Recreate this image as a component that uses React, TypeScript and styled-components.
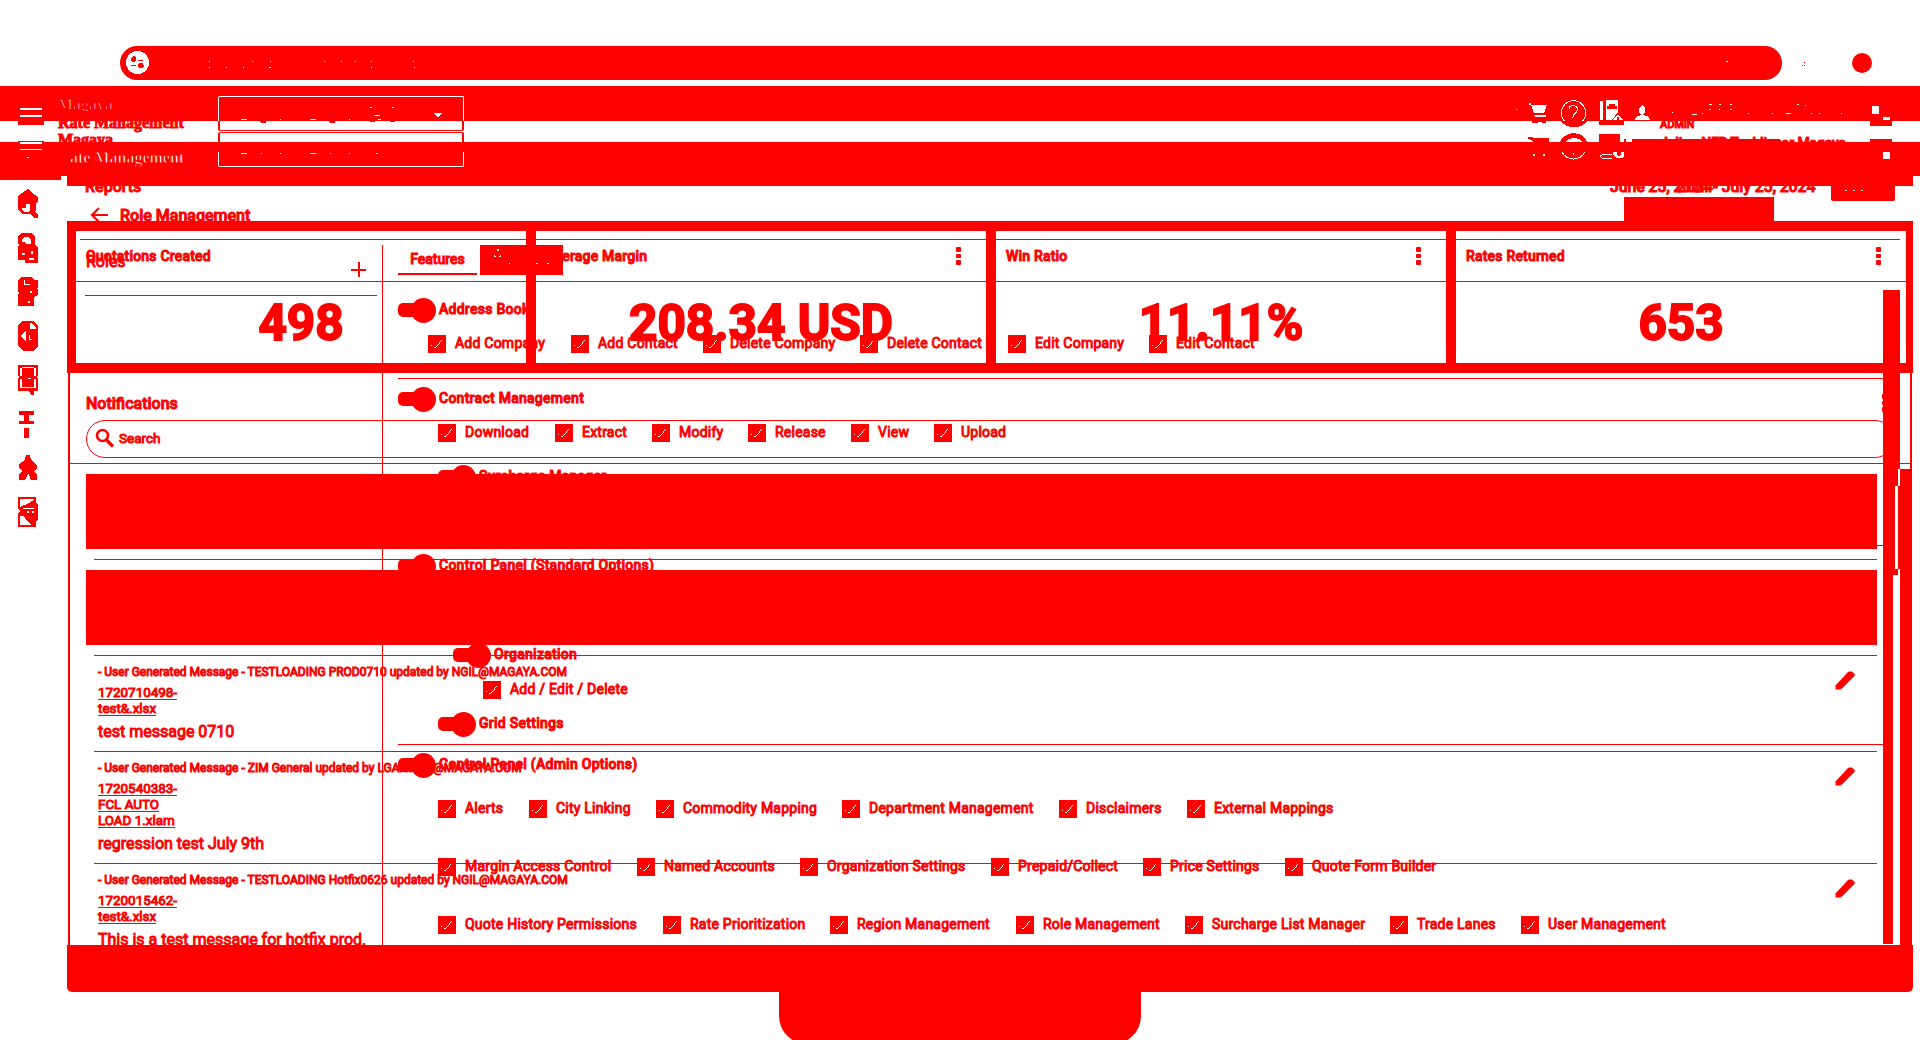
import React from 'react';
import styled, { createGlobalStyle, css } from 'styled-components';

const RED = '#ff0000';

const GlobalStyle = createGlobalStyle`
  *, *::before, *::after { box-sizing: border-box; }
  body { margin: 0; background: #ffffff; font-family: Roboto, "Liberation Sans", sans-serif; color: ${RED}; }
  svg { display: block; }
`;

const heavy = css`
  -webkit-text-stroke: 0.95px ${RED};
`;

const Page = styled.div`
  position: relative;
  width: 1920px;
  height: 1040px;
  overflow: hidden;
  background: #ffffff;
  display: flex;
  flex-direction: column;
`;

/* ---------- browser strip ---------- */
const BrowserStrip = styled.div`
  height: 86px;
  flex: none;
  padding: 46px 48px 6px 120px;
  display: flex;
  align-items: center;
`;
const AddressBar = styled.div`
  width: 1662px;
  flex: none;
  height: 34px;
  border-radius: 17px;
  background: ${RED};
  display: flex;
  align-items: center;
  padding-left: 5px;
`;
const ExtensionDots = styled.div`
  width: 70px;
  flex: none;
  display: flex;
  padding-left: 20px;
`;
const Profile = styled.div`
  width: 20px;
  height: 20px;
  flex: none;
  border-radius: 50%;
  background: ${RED};
`;

/* ---------- header bands ---------- */
const Band = styled.div<{ $h: number; $filled?: boolean }>`
  height: ${p => p.$h}px;
  flex: none;
  overflow: hidden;
  background: ${p => (p.$filled ? RED : '#ffffff')};
  display: grid;
  align-items: start;
  grid-template-rows: ${p => p.$h}px;
  grid-template-columns: 18px 26px 14px 132px 28px 246px 1050px 36px 8px 32px 8px 28px 6px 20px 8px 192px 16px 26px;
`;
const Cell = styled.div<{ $col: number; $top?: number }>`
  grid-column: ${p => p.$col};
  grid-row: 1;
  margin-top: ${p => p.$top ?? 0}px;
`;
const Brand = styled.div<{ $light?: boolean; $trim?: number }>`
  font: 700 16px/17px "Liberation Serif", serif;
  white-space: nowrap;
  color: ${p => (p.$light ? '#ffffff' : RED)};
  -webkit-text-stroke: ${p => p.$trim ?? 0.9}px ${RED};
`;
const SelectEdge = styled.div<{ $h: number; $side: 'top' | 'bottom'; $light?: boolean }>`
  height: ${p => p.$h}px;
  border: ${p => (p.$light ? 1 : 2)}px solid ${p => (p.$light ? '#ffffff' : RED)};
  ${p => (p.$side === 'top' ? 'border-bottom: 0;' : 'border-top: 0;')}
  border-${p => p.$side}-width: 1px;
  border-radius: ${p => (p.$side === 'top' ? '2px 2px 0 0' : '0 0 2px 2px')};
`;
const SecondEdge = styled.div`
  margin-top: 1px;
`;
const Account = styled.div<{ $size: number; $gap?: number }>`
  margin-top: ${p => p.$gap ?? 0}px;
  font-weight: 500;
  font-size: ${p => p.$size}px;
  line-height: 14px;
  letter-spacing: -0.15px;
  white-space: nowrap;
  ${heavy}
`;
const BandTail = styled.div`
  height: 10px;
  flex: none;
  display: flex;
  gap: 6px;
`;
const TailLeft = styled.div`
  width: 61px;
  height: 4px;
  background: ${RED};
`;
const TailMain = styled.div`
  width: 1846px;
  background: ${RED};
`;

/* ---------- body ---------- */
const Body = styled.div`
  height: 806px;
  flex: none;
  display: flex;
`;
const Rail = styled.div`
  width: 67px;
  padding: 3px 0 0 18px;
`;
const Main = styled.div`
  width: 1846px;
  display: flex;
  flex-direction: column;
`;
const Stack = styled.div`
  position: relative;
  height: 759px;
  overflow: hidden;
`;
const Layer = styled.div`
  position: absolute;
  inset: 0;
  display: flex;
  flex-direction: column;
`;
const FootBar = styled.div`
  height: 47px;
  background: ${RED};
  border-radius: 0 0 5px 5px;
`;
const Stand = styled.div`
  width: 362px;
  height: 52px;
  flex: none;
  margin-left: 779px;
  background: ${RED};
  border-radius: 0 0 28px 28px;
`;

/* ---------- dashboard ---------- */
const ReportRow = styled.div`
  height: 35px;
  flex: none;
  display: flex;
  align-items: flex-start;
  overflow: hidden;
  padding-left: 18px;
`;
const ReportTitle = styled.div`
  width: 1525px;
  margin-top: -8px;
  font-size: 16px;
  line-height: 18px;
  font-weight: 500;
  ${heavy}
`;
const DateStack = styled.div`
  width: 221px;
  margin-top: -8px;
  display: grid;
  font-size: 16px;
  line-height: 18px;
  font-weight: 500;
  letter-spacing: -0.18px;
  white-space: nowrap;
  ${heavy}
  & > span { grid-area: 1 / 1; }
`;
const MiddleDate = styled.span`
  padding-left: 67px;
`;
const RunButton = styled.div`
  width: 64px;
  height: 15px;
  background: ${RED};
  border-radius: 0 0 2px 2px;
  padding-left: 13px;
`;
const Banner = styled.div`
  position: absolute;
  left: 1557px;
  top: 11px;
  width: 150px;
  height: 24px;
  background: ${RED};
`;
const Metrics = styled.div`
  height: 152px;
  flex: none;
  display: flex;
  border: solid ${RED};
  border-width: 10px 7px 10px 9px;
`;
const Metric = styled.div`
  flex: 0 0 auto;
  width: 460px;
  border-right: 10px solid ${RED};
  &:last-child { width: 450px; border-right: 0; }
`;
const MetricHead = styled.div`
  height: 51px;
  border-bottom: 1px solid ${RED};
  padding: 16px 25px 0 10px;
  display: flex;
  justify-content: space-between;
  font-size: 14px;
  line-height: 18px;
  font-weight: 500;
  letter-spacing: 0.2px;
  ${heavy}
`;
const Kebab = styled.div`
  display: flex;
  flex-direction: column;
  gap: 2px;
  i { width: 5px; height: 4.5px; background: ${RED}; border-radius: 1px; }
`;
const MetricValue = styled.div`
  height: 81px;
  text-align: center;
  font-size: 49.5px;
  line-height: 82px;
  font-weight: 700;
  -webkit-text-stroke: 1.9px ${RED};
`;
const Notices = styled.div`
  flex: 1;
  min-height: 0;
  margin: 0 1px;
  border: solid ${RED};
  border-width: 0 2px;
  overflow: hidden;
`;
const NoticeHead = styled.div`
  height: 91px;
  border-bottom: 1px solid ${RED};
  padding: 21px 23px 0 16px;
`;
const NoticeTitle = styled.div`
  height: 26px;
  display: flex;
  justify-content: space-between;
  font-size: 16px;
  line-height: 19px;
  font-weight: 500;
  ${heavy}
`;
const SearchBox = styled.div`
  width: 1808px;
  height: 38px;
  border: 1px solid ${RED};
  border-radius: 19px;
  display: flex;
  align-items: center;
  gap: 4px;
  padding: 0 0 3px 8px;
  font-size: 13.5px;
  ${heavy}
`;
const NoticeList = styled.div`
  padding: 10px 0 0 16px;
  width: 1807px;
`;
const Redacted = styled.div`
  height: 75px;
  background: ${RED};
`;
const Rule = styled.div<{ $above: number; $below: number }>`
  height: 1px;
  margin: ${p => p.$above}px 0 ${p => p.$below}px 8px;
  background: ${RED};
`;
const Message = styled.div<{ $h: number }>`
  height: ${p => p.$h}px;
  padding: 8px 21px 0 12px;
  display: flex;
  justify-content: space-between;
`;
const Meta = styled.div`
  font-size: 12px;
  line-height: 17px;
  white-space: nowrap;
  ${heavy}
`;
const FileLink = styled.div`
  display: flex;
  flex-direction: column;
  align-items: flex-start;
  margin-top: 3px;
  font-size: 13.4px;
  line-height: 16px;
  ${heavy}
  span { height: 16px; border-bottom: 1px solid ${RED}; line-height: 17px; white-space: nowrap; }
`;
const MessageText = styled.div`
  margin-top: 5px;
  font-size: 16px;
  line-height: 22px;
  ${heavy}
`;
const EditButton = styled.div`
  padding-top: 7px;
`;

/* ---------- role management ---------- */
const RoleTitle = styled.div`
  height: 35px;
  flex: none;
  overflow: hidden;
  display: flex;
  align-items: flex-start;
  gap: 12px;
  padding: 21px 0 0 23px;
  font-size: 16px;
  line-height: 18px;
  font-weight: 500;
  ${heavy}
`;
const RolePanel = styled.div`
  flex: 1;
  min-height: 0;
  margin: 18px 13px 0 13px;
  border-top: 1px solid ${RED};
  display: flex;
`;
const RoleSide = styled.div`
  width: 303px;
  flex: none;
  margin-top: 5px;
  border-right: 1px solid ${RED};
  padding: 8px 5px 0 5px;
`;
const RoleSideHead = styled.div`
  height: 43px;
  border-bottom: 1px solid ${RED};
  display: flex;
  justify-content: space-between;
  padding: 0 11px 0 1px;
  font-size: 16px;
  line-height: 17px;
  ${heavy}
`;
const PlusIcon = styled.div`
  margin-top: 9px;
`;
const FeaturePane = styled.div`
  width: 1485px;
  margin-left: 15px;
  flex: none;
`;
const Tabs = styled.div`
  height: 50px;
  padding-top: 5px;
  display: flex;
  gap: 3px;
`;
const ActiveTab = styled.div`
  width: 79px;
  height: 30px;
  border-bottom: 2px solid ${RED};
  text-align: center;
  font-size: 14px;
  line-height: 29px;
  font-weight: 500;
  ${heavy}
`;
const UsersTab = styled.div`
  width: 83px;
  height: 30px;
  background: ${RED};
`;
const ToggleRow = styled.div<{ $gap: number; $indent?: number }>`
  height: 25px;
  margin-top: ${p => p.$gap - 1}px;
  padding-bottom: 1px;
  margin-left: ${p => p.$indent ?? 0}px;
  display: flex;
  align-items: center;
  gap: 3px;
  font-size: 14px;
  line-height: 20px;
  font-weight: 500;
  letter-spacing: 0.27px;
  white-space: nowrap;
  ${heavy}
  & > span { margin-top: -2px; }
`;
const Switch = styled.div`
  width: 38px;
  height: 24px;
  display: flex;
  align-items: center;
`;
const SwitchTrack = styled.div`
  width: 18px;
  height: 14px;
  margin-right: -5px;
  background: ${RED};
  border-radius: 5px 0 0 5px;
`;
const SwitchKnob = styled.div`
  width: 25px;
  height: 25px;
  border-radius: 50%;
  background: ${RED};
`;
const CheckRow = styled.div<{ $gap: number; $indent: number }>`
  height: 18px;
  margin-top: ${p => p.$gap}px;
  margin-left: ${p => p.$indent}px;
  display: flex;
`;
const CheckItem = styled.div<{ $w: number }>`
  width: ${p => p.$w}px;
  flex: none;
  display: flex;
  gap: 9px;
  font-size: 14px;
  line-height: 17px;
  white-space: nowrap;
  letter-spacing: 0.23px;
  ${heavy}
`;
const Divider = styled.div<{ $gap: number }>`
  height: 1px;
  margin-top: ${p => p.$gap}px;
  background: ${RED};
`;

/* ---------- scroll bars floating over both screens ---------- */
const ScrollBar = styled.div<{ $x: number; $y: number; $w: number; $h: number; $light?: boolean }>`
  position: absolute;
  left: ${p => p.$x - 67}px;
  top: ${p => p.$y - 186}px;
  width: ${p => p.$w}px;
  height: ${p => p.$h}px;
  background: ${p => (p.$light ? '#ffffff' : RED)};
`;

/* ---------- drawings ---------- */
type GlyphProps = { x: number; y: number; w: number; h: number; children: React.ReactNode };
const Glyph = ({ x, y, w, h, children }: GlyphProps) => (
  <svg width={w} height={h} viewBox={`${x} ${y} ${w} ${h}`} fill="none" shapeRendering="crispEdges">
    {children}
  </svg>
);

type Mark = [number, number, number];
const Marks = ({ items, fill = '#fff' }: { items: Mark[]; fill?: string }) => (
  <>
    {items.map(([x, y, w], i) => (
      <rect key={i} x={x} y={y} width={w} height={1} fill={fill} />
    ))}
  </>
);

const CheckIcon = () => (
  <svg width="18" height="18" viewBox="0 0 18 18" shapeRendering="crispEdges">
    <rect width="18" height="18" fill={RED} />
    <path
      d="M3 10h1v1h-1z M6 12h2v1h-2z M8 11h1v1h-1z M9 10h1v1h-1z M10 9h1v1h-1z M11 7h1v2h-1z M12 6h1v1h-1z M13 5h1v1h-1z"
      fill="#fff"
    />
  </svg>
);

const Pencil = () => (
  <svg width="22" height="20" viewBox="0 0 22 20">
    <path d="M1.500 14.500 L13.500 1.500 L15 0.500 H18 L21 3.500 L20 5.500 L8.500 17 L6.500 18.500 H1.500Z" fill={RED} />
  </svg>
);

const Dots = () => (
  <Kebab>
    <i />
    <i />
    <i />
  </Kebab>
);

const Checks = ({ gap, indent, items }: { gap: number; indent: number; items: [string, number][] }) => (
  <CheckRow $gap={gap} $indent={indent}>
    {items.map(([label, w]) => (
      <CheckItem key={label} $w={w}>
        <CheckIcon />
        <span>{label}</span>
      </CheckItem>
    ))}
  </CheckRow>
);

const Toggle = ({ gap, indent, label }: { gap: number; indent?: number; label?: string }) => (
  <ToggleRow $gap={gap} $indent={indent}>
    <Switch>
      <SwitchTrack />
      <SwitchKnob />
    </Switch>
    {label && <span>{label}</span>}
  </ToggleRow>
);

const RailIcons = () => (
  <Glyph x={18} y={189} w={22} h={340}>
    <g fill={RED} fillRule="evenodd">
      <path d="M28 189 L31 192 L38 197 V202 L36 203 V210 L35 212 L38 214 V218 H34 L30 214 H22 L18 210 V196 L25 191Z M26 204 H30 V210 L28 212 H24 L22 210 V208 H26Z" />
      <path d="M21 233 H31 L35 236 V244 L38 248 V263 H25 V260 H18 V247 L19 245 L18 243 V236Z M25 237 L22 239 V242 H24 L26 244 H31 V240 L28 237Z M22 253 V255 H25 V253Z M31 251 V254 H33 V251Z M29 258 V260 H34 V258Z" />
      <path d="M21 277 H31 L34 280 H38 V287 L36 289 H38 V295 L34 297 V306 H18 V294 H19 V292 H18 V280Z M24 280 V285 H30 V284 H25 V280Z M28 301 V303 H30 V301Z M30 291 V293 H32 V291Z" />
      <path d="M23 321 H33 L38 325 V346 L34 351 H23 L18 346 V325Z M30 323 V329 H36 V328 L31 323Z M20 336 L26 331 V341Z M29 335 V340 H32 V339 H30 V335Z" />
      <path d="M18 365 H38 V376 H37 V378 H38 V391 H34 V395 H31 L29 391 H18 V378 H19 V376 H18Z M20 368 V376 H22 V368Z M34 368 V376 H36 V368Z M20 379 V388 H22 V379Z M34 379 V388 H36 V379Z M22 367 V368 H34 V367Z M28 378 V379 H31 V378Z M22 387 V388 H34 V387Z" />
      <path d="M19 411 H34 V415 H29 V421 H34 V424 H19 V421 H24 V415 H19Z M24 428 H29 V438 H24Z" />
      <path d="M26 455 H30 L31 460 L37 465 V469 L34 471 L37 475 V480 H31 L29 474 H28 L25 480 H19 V475 L22 471 L19 468 V464 L25 460Z" />
      <path d="M18 497 H36 V503 L38 504 V519 L36 521 V527 H18 V514 L20 511 L18 509Z M20 499 V507 L27 504 L34 500 V499Z M20 516 V525 H31 L26 520 L24 516Z M23 508 V509 H34 V508Z M27 511 V513 H29 V511Z M32 511 V513 H34 V511Z" />
    </g>
  </Glyph>
);

const metrics: [string, string, boolean][] = [
  ['Quotations Created', '498', false],
  ['Average Margin', '208.34 USD', true],
  ['Win Ratio', '11.11%', true],
  ['Rates Returned', '653', true],
];

type Note = { h: number; meta: string; file: string[]; text: string };
const notes: Note[] = [
  { h: 95, meta: '- User Generated Message - TESTLOADING PROD0710 updated by NGIL@MAGAYA.COM', file: ['1720710498-', 'test&.xlsx'], text: 'test message 0710' },
  { h: 111, meta: '- User Generated Message - ZIM General updated by LGARCIAS@MAGAYA.COM', file: ['1720540383-', 'FCL AUTO', 'LOAD 1.xlam'], text: 'regression test July 9th' },
  { h: 95, meta: '- User Generated Message - TESTLOADING Hotfix0626 updated by NGIL@MAGAYA.COM', file: ['1720015462-', 'test&.xlsx'], text: 'This is a test message for hotfix prod.' },
];

const Headers = () => (
  <>
    <Band $h={35} $filled>
      <Cell $col={2}>
        <Glyph x={18} y={86} w={26} h={35}>
          <path d="M20 108h22v2h-22z M20 115h22v2h-22z" fill="#fff" />
        </Glyph>
      </Cell>
      <Cell $col={4} $top={10}><Brand $light $trim={1.6}>Magaya</Brand></Cell>
      <Cell $col={6} $top={10}>
        <SelectEdge $h={25} $side="top" $light>
          <Glyph x={219} y={97} w={244} h={24}>
            <path d="M434 113h8l-4 5z" fill="#fff" />
            <Marks items={[[370, 107, 2], [392, 107, 2], [374, 115, 6], [241, 119, 6], [310, 119, 6], [280, 119, 1], [349, 119, 1], [378, 119, 3]]} />
          </Glyph>
        </SelectEdge>
      </Cell>
      <Cell $col={8}>
        <Glyph x={1514} y={86} w={36} h={35}>
          <path d="M1529 103h2v2h-2z M1531 105H1547L1544 113H1534Z M1533 115H1546V117H1535Z" fill="#fff" />
          <Marks items={[[1516, 109, 1]]} />
        </Glyph>
      </Cell>
      <Cell $col={10}>
        <Glyph x={1558} y={86} w={32} h={35}>
          <circle cx="1573.5" cy="113" r="12.2" stroke="#fff" />
          <path d="M1569 109q0-3 4-3.500q4.500.5 4.500 4q0 2-3 4.500q-1.500 1-1.500 3.500" stroke="#fff" />
        </Glyph>
      </Cell>
      <Cell $col={12}>
        <Glyph x={1598} y={86} w={28} h={35}>
          <path fillRule="evenodd" fill="#fff" d="M1600 101h3v19h-3z M1606 100h12v12l-6 8h-6z M1609 104v2h-2v3h10v-3h-2v-2z" />
          <path d="M1613 120L1618 114L1623 120H1619V117H1617V120Z" fill="#fff" />
        </Glyph>
      </Cell>
      <Cell $col={14}>
        <Glyph x={1632} y={86} w={20} h={35}>
          <path d="M1642 105l3 3v4l-2 3l6 2l1 3h-15l1-3l5-2l-2-3v-4z" fill="#fff" />
        </Glyph>
      </Cell>
      <Cell $col={16}>
        <Glyph x={1660} y={86} w={192} h={35}>
          <Marks items={[[1672, 112, 1], [1692, 114, 5], [1702, 113, 1], [1709, 104, 3], [1719, 104, 2], [1730, 104, 2], [1709, 109, 2], [1719, 109, 1], [1730, 109, 2], [1748, 113, 1], [1772, 113, 1], [1786, 113, 5], [1797, 104, 2], [1805, 105, 1], [1811, 113, 1], [1819, 113, 1], [1841, 113, 1]]} />
        </Glyph>
      </Cell>
      <Cell $col={18}>
        <Glyph x={1868} y={86} w={26} h={35}>
          <path d="M1872 106h7v8h-7z M1883 117h7v3h-7z" fill="#fff" />
        </Glyph>
      </Cell>
    </Band>
    <Band $h={21}>
      <Cell $col={2}>
        <Glyph x={18} y={121} w={26} h={21}>
          <path d="M18 121h26v4h-26z M18 141h26v1h-26z" fill={RED} />
        </Glyph>
      </Cell>
      <Cell $col={4} $top={-7}>
        <Brand>Rate Management</Brand>
        <Brand>Magaya</Brand>
      </Cell>
      <Cell $col={6}>
        <SelectEdge $h={10} $side="bottom">
          <Glyph x={220} y={121} w={242} h={9}>
            <path d="M260 121h6v2h-5z M329 121h6v2h-5z M370 121h5v1h-5z M390 121h5v1h-5z" fill={RED} />
          </Glyph>
        </SelectEdge>
        <SecondEdge><SelectEdge $h={10} $side="top" /></SecondEdge>
      </Cell>
      <Cell $col={8}>
        <Glyph x={1514} y={121} w={36} h={21}>
          <path d="M1532 121h14v2h-4v-1h-4v1h-6z M1528 137h5v1h16v4h-16l-2-2l-3-1z" fill={RED} />
        </Glyph>
      </Cell>
      <Cell $col={10}>
        <Glyph x={1558} y={121} w={32} h={21}>
          <path d="M1561 121h26q-4 6-13 6t-13-6z M1560 142q3-8 14-9q10 1 13 9h-4q-4-4-9-4t-9 4z" fill={RED} />
        </Glyph>
      </Cell>
      <Cell $col={12}>
        <Glyph x={1598} y={121} w={28} h={21}>
          <path d="M1599 121h25v4h-25z M1599 134h21v8h-21z M1624 139h2v3h-2z" fill={RED} />
        </Glyph>
      </Cell>
      <Cell $col={14} $top={18}>
        <Glyph x={1626} y={139} w={148} h={3}>
          <path d="M1626 139h148v3h-148z" fill={RED} />
        </Glyph>
      </Cell>
      <Cell $col={16} $top={-3}>
        <Account $size={11}>ADMIN</Account>
        <Account $size={14} $gap={4}>Julio - NFR Techlinear Magaya</Account>
      </Cell>
      <Cell $col={18}>
        <Glyph x={1868} y={121} w={26} h={21}>
          <path d="M1870 121h22v5h-22z M1870 139h22v3h-22z" fill={RED} />
        </Glyph>
      </Cell>
    </Band>
    <Band $h={34} $filled>
      <Cell $col={2}>
        <Glyph x={18} y={142} w={26} h={34}>
          <path d="M20 142h22v2h-22z M20 149h22v1h-22z M27 157h2v1h-2z" fill="#fff" />
        </Glyph>
      </Cell>
      <Cell $col={4} $top={7}><Brand $light $trim={0.9}>&nbsp;&nbsp;&nbsp;ate Management</Brand></Cell>
      <Cell $col={6} $top={10}>
        <SelectEdge $h={15} $side="bottom" $light>
          <Glyph x={219} y={152} w={244} h={14}>
            <Marks items={[[241, 153, 6], [310, 153, 6], [261, 153, 1], [280, 153, 1], [330, 153, 1], [349, 153, 1], [376, 153, 2]]} />
          </Glyph>
        </SelectEdge>
      </Cell>
      <Cell $col={8}>
        <Glyph x={1514} y={142} w={36} h={34}>
          <path d="M1533 154h2v2h-2z M1543 154h2v2h-2z" fill="#fff" />
        </Glyph>
      </Cell>
      <Cell $col={10}>
        <Glyph x={1558} y={142} w={32} h={34}>
          <path d="M1562 152q4 7 11.500 7t11.500-7 M1573.500 153v2" stroke="#fff" />
        </Glyph>
      </Cell>
      <Cell $col={12}>
        <Glyph x={1598} y={142} w={28} h={34}>
          <path d="M1612 154.500h-9l-3 1.500l2 2h10" stroke="#fff" />
          <path d="M1613 152h4v3l2 1l2-1v-3h3v4l-2 2h-5l-4-3z" fill="#fff" />
        </Glyph>
      </Cell>
      <Cell $col={18}>
        <Glyph x={1868} y={142} w={26} h={34}>
          <path d="M1883 152h7v7h-7z" fill="#fff" />
        </Glyph>
      </Cell>
    </Band>
    <BandTail>
      <TailLeft />
      <TailMain />
    </BandTail>
  </>
);

const RoleManagement = () => (
  <Layer>
    <RoleTitle>
      <svg width="18" height="16" viewBox="0 0 18 16">
        <path d="M9 1 L2 8 L9 15 M2 8 H18" fill="none" stroke={RED} strokeWidth="2.2" />
      </svg>
      Role Management
    </RoleTitle>
    <RolePanel>
      <RoleSide>
        <RoleSideHead>
          Roles
          <PlusIcon>
            <svg width="15" height="15" viewBox="0 0 15 15" shapeRendering="crispEdges">
              <path d="M0 6.500h15v2h-15z M6.500 0h2v15h-2z" fill={RED} />
            </svg>
          </PlusIcon>
        </RoleSideHead>
      </RoleSide>
      <FeaturePane>
        <Tabs>
          <ActiveTab>Features</ActiveTab>
          <UsersTab>
            <Glyph x={480} y={245} w={83} h={30}>
              <path d="M498 248l1 2l-1 2l-1-2z M494 254l2 3h-2z M501 254v3h-2z" fill="#fff" />
              <Marks items={[[509, 263, 1], [536, 263, 2], [547, 263, 2]]} />
            </Glyph>
          </UsersTab>
        </Tabs>
        <Toggle gap={9} label="Address Book" />
        <Checks gap={12} indent={30} items={[['Add Company', 143], ['Add Contact', 132], ['Delete Company', 157], ['Delete Contact', 148], ['Edit Company', 141], ['Edit Contact', 140]]} />
        <Divider $gap={25} />
        <Toggle gap={9} label="Contract Management" />
        <Checks gap={12} indent={40} items={[['Download', 117], ['Extract', 97], ['Modify', 96], ['Release', 103], ['View', 83], ['Upload', 110]]} />
        <Toggle gap={24} indent={40} label="Surcharge Manager" />
        <Divider $gap={55} />
        <Toggle gap={9} label="Control Panel (Standard Options)" />
        <Toggle gap={44} indent={55} />
        <Toggle gap={-3} indent={55} label="Organization" />
        <Checks gap={13} indent={85} items={[['Add / Edit / Delete', 180]]} />
        <Toggle gap={14} indent={40} label="Grid Settings" />
        <Divider $gap={7} />
        <Toggle gap={9} label="Control Panel (Admin Options)" />
        <Checks gap={22} indent={40} items={[['Alerts', 91], ['City Linking', 127], ['Commodity Mapping', 186], ['Department Management', 217], ['Disclaimers', 128], ['External Mappings', 160]]} />
        <Checks gap={40} indent={40} items={[['Margin Access Control', 199], ['Named Accounts', 163], ['Organization Settings', 191], ['Prepaid/Collect', 152], ['Price Settings', 142], ['Quote Form Builder', 160]]} />
        <Checks gap={40} indent={40} items={[['Quote History Permissions', 225], ['Rate Prioritization', 167], ['Region Management', 186], ['Role Management', 169], ['Surcharge List Manager', 205], ['Trade Lanes', 131], ['User Management', 160]]} />
      </FeaturePane>
    </RolePanel>
  </Layer>
);

const Dashboard = () => (
  <Layer>
    <ReportRow>
      <ReportTitle>Reports</ReportTitle>
      <DateStack>
        <span>June 25, 2024 - July 25, 2024</span>
        <MiddleDate>2024</MiddleDate>
      </DateStack>
      <RunButton>
        <Glyph x={1844} y={186} w={40} h={15}>
          <Marks items={[[1845, 190, 2], [1853, 190, 2], [1861, 190, 2]]} />
        </Glyph>
      </RunButton>
    </ReportRow>
    <Banner />
    <Metrics>
      {metrics.map(([title, value, menu]) => (
        <Metric key={title}>
          <MetricHead>
            <span>{title}</span>
            {menu && <Dots />}
          </MetricHead>
          <MetricValue>{value}</MetricValue>
        </Metric>
      ))}
    </Metrics>
    <Notices>
      <NoticeHead>
        <NoticeTitle>
          Notifications
          <Dots />
        </NoticeTitle>
        <SearchBox>
          <svg width="20" height="20" viewBox="0 0 20 20">
            <circle cx="7.500" cy="7.500" r="5.500" fill="none" stroke={RED} strokeWidth="2.600" />
            <path d="M11.500 12 L18 18.500" stroke={RED} strokeWidth="3.400" />
          </svg>
          Search
        </SearchBox>
      </NoticeHead>
      <NoticeList>
        <Redacted />
        <Rule $above={10} $below={10} />
        <Redacted />
        <Rule $above={10} $below={0} />
        {notes.map((n, i) => (
          <React.Fragment key={n.text}>
            {i > 0 && <Rule $above={0} $below={0} />}
            <Message $h={n.h}>
              <div>
                <Meta>{n.meta}</Meta>
                <FileLink>
                  {n.file.map(f => (
                    <span key={f}>{f}</span>
                  ))}
                </FileLink>
                <MessageText>{n.text}</MessageText>
              </div>
              <EditButton>
                <Pencil />
              </EditButton>
            </Message>
          </React.Fragment>
        ))}
      </NoticeList>
    </Notices>
    <ScrollBar $x={1883} $y={290} $w={17} $h={654} />
    <ScrollBar $x={1900} $y={469} $w={12} $h={476} />
    <ScrollBar $x={1898} $y={469} $w={2} $h={17} $light />
    <ScrollBar $x={1895} $y={486} $w={3} $h={83} $light />
    <ScrollBar $x={1893} $y={575} $w={7} $h={370} $light />
    <ScrollBar $x={1898} $y={569} $w={2} $h={6} $light />
  </Layer>
);

export default function App() {
  return (
    <Page>
      <GlobalStyle />
      <BrowserStrip>
        <AddressBar>
          <Glyph x={125} y={46} w={1650} h={34}>
            <circle cx="137.500" cy="62.500" r="11.500" fill="#fff" />
            <path d="M131 58l2-2h2l1 2v3l-2 1h-2l-1-2z M138 60h5v1h-5z M131 65h5v1h-5z M138 64l2-1h3l1 3l-1 2h-4l-1-1z" fill={RED} />
            <Marks items={[[209, 61, 1], [209, 67, 1], [226, 67, 1], [243, 67, 1], [252, 61, 1], [270, 61, 1], [269, 67, 2], [324, 61, 1], [341, 61, 1], [355, 61, 1], [371, 61, 1], [371, 67, 1], [413, 61, 1], [414, 67, 1], [1726, 61, 2]]} />
          </Glyph>
        </AddressBar>
        <ExtensionDots>
          <Glyph x={1802} y={60} w={4} h={5}>
            <Marks fill={RED} items={[[1804, 61, 1], [1802, 64, 1], [1804, 64, 1]]} />
          </Glyph>
        </ExtensionDots>
        <Profile />
      </BrowserStrip>
      <Headers />
      <Body>
        <Rail>
          <RailIcons />
        </Rail>
        <Main>
          <Stack>
            <RoleManagement />
            <Dashboard />
          </Stack>
          <FootBar />
        </Main>
      </Body>
      <Stand />
    </Page>
  );
}
